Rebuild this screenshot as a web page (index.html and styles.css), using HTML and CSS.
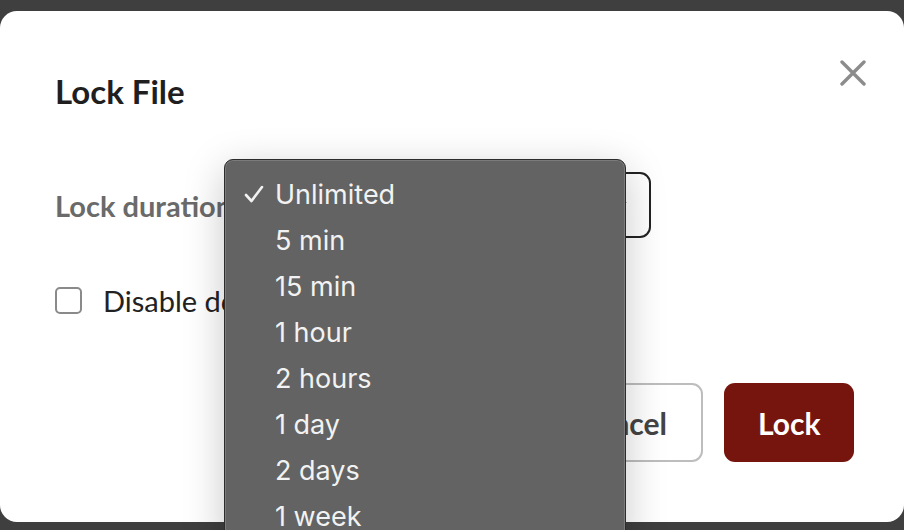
FILE: index.html
```html
<!DOCTYPE html>
<html lang="en">
<head>
    <meta charset="UTF-8">
    <title>Lock File</title>
    <link rel="stylesheet" href="styles.css">
</head>
<body>
    <div class="modal">
        <div class="modal-header">
            <h2>Lock File</h2>
            <button class="close-btn" aria-label="Close">
                <svg width="26" height="26" viewBox="0 0 26 26"><path d="M2 2 L24 24 M24 2 L2 24" stroke="#8c8c8c" stroke-width="3.4" stroke-linecap="round"/></svg>
            </button>
        </div>

        <div class="field-row">
            <label class="field-label">Lock duration</label>
            <div class="select-box">
                <span class="select-value">Unlimited</span>
                <svg class="select-arrow" width="14" height="8" viewBox="0 0 14 8"><path d="M1 1 L7 7 L13 1" stroke="#222" stroke-width="1.6" fill="none"/></svg>
            </div>
        </div>

        <div class="check-row">
            <span class="checkbox"></span>
            <span class="check-label">Disable download</span>
        </div>

        <div class="modal-footer">
            <button class="btn btn-cancel">Cancel</button>
            <button class="btn btn-lock">Lock</button>
        </div>

        <!-- native select popup, open over the form -->
        <ul class="dropdown">
            <li class="selected">
                <svg class="tick" width="20" height="18" viewBox="0 0 20 18"><path d="M2 10 L7.5 16 L18 2" stroke="#f2f2f2" stroke-width="2.6" fill="none" stroke-linecap="round" stroke-linejoin="round"/></svg>
                Unlimited
            </li>
            <li>5 min</li>
            <li>15 min</li>
            <li>1 hour</li>
            <li>2 hours</li>
            <li>1 day</li>
            <li>2 days</li>
            <li>1 week</li>
        </ul>
    </div>
</body>
</html>
```

FILE: styles.css
```css
html, body {
    height: 100%;
    overflow: hidden;
}
body {
    margin: 0;
    padding-top: 11px;
    background: #3f3f3f;
    font-family: "Lato", "Liberation Sans", Arial, sans-serif;
    box-sizing: border-box;
}
.modal {
    position: relative;
    height: 511px;
    background: #fff;
    border-radius: 17px;
    padding: 60px 50px 0 55px;
    box-sizing: border-box;
}
.modal-header {
    display: flex;
    justify-content: space-between;
    align-items: center;
    height: 40px;
}
.modal-header h2 {
    margin: 0;
    font-size: 33px;
    font-weight: 700;
    color: #1f1f1f;
}
.close-btn {
    align-self: flex-start;
    margin-top: -11px;
    margin-right: -12px;
    padding: 0;
    border: none;
    background: none;
    width: 26px;
    height: 26px;
}
.field-row {
    display: flex;
    align-items: center;
    gap: 14px;
    margin-top: 61px;
}
.field-label {
    font-size: 29px;
    font-weight: 700;
    color: #6a6a6a;
}
.select-box {
    display: flex;
    align-items: center;
    justify-content: space-between;
    width: 405px;
    height: 66px;
    border: 2px solid #222;
    border-radius: 11px;
    box-sizing: border-box;
    padding: 0 22px 0 18px;
    font-size: 26px;
    color: #222;
}
.check-row {
    display: flex;
    align-items: center;
    gap: 21px;
    height: 40px;
    margin-top: 42px;
}
.checkbox {
    width: 27px;
    height: 27px;
    border: 2px solid #8a8a8a;
    border-radius: 5px;
    box-sizing: border-box;
}
.check-label {
    font-size: 29px;
    color: #222;
}
.modal-footer {
    display: flex;
    justify-content: flex-end;
    gap: 21px;
    margin-top: 63px;
}
.btn {
    height: 79px;
    border-radius: 11px;
    font-family: inherit;
    font-size: 30px;
    font-weight: 700;
    padding: 0 34px;
    box-sizing: border-box;
}
.btn-cancel {
    background: #fff;
    border: 2px solid #bdbdbd;
    color: #444;
}
.btn-lock {
    width: 130px;
    background: #76140e;
    border: none;
    color: #fff;
}
.dropdown {
    position: absolute;
    left: 224px;
    top: 148px;
    width: 400px;
    margin: 0;
    padding: 12px 0;
    list-style: none;
    background: #626362;
    border: 1px solid #2c2c2c;
    border-radius: 9px;
    box-shadow: inset 0 0 0 1px #7b7b7b, 0 10px 40px rgba(0, 0, 0, 0.22);
    font-family: "Inter", "Roboto", sans-serif;
    font-size: 27px;
    color: #f2f2f2;
}
.dropdown li {
    position: relative;
    height: 46px;
    line-height: 46px;
    padding-left: 50px;
}
.tick {
    position: absolute;
    left: 19px;
    top: 13px;
}
```
